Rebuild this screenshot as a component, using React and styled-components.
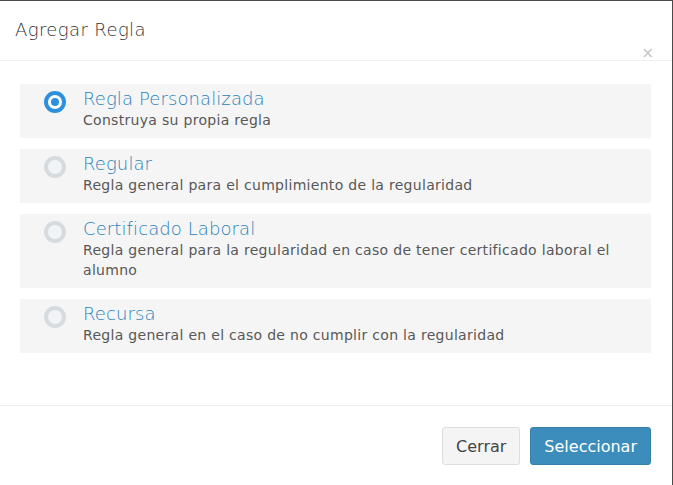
import React, { useState } from 'react';
import styled, { createGlobalStyle } from 'styled-components';

const GlobalStyle = createGlobalStyle`
  html, body {
    margin: 0;
    padding: 0;
    background: #fff;
  }
  * {
    box-sizing: border-box;
  }
`;

const Modal = styled.div`
  width: 674px;
  height: 486px;
  margin-left: -1px;
  border: 1px solid #4a4a4a;
  background: #fff;
  font-family: "DejaVu Sans", "Open Sans", sans-serif;
  display: flex;
  flex-direction: column;
  overflow: hidden;
`;

const Header = styled.div`
  display: flex;
  justify-content: space-between;
  align-items: flex-start;
  height: 60px;
  padding: 18px 18px 0 15px;
  border-bottom: 1px solid #f0f0f0;
`;

const Title = styled.h4`
  margin: 0;
  font-size: 18px;
  letter-spacing: 0.4px;
  line-height: 22px;
  font-weight: 200;
  color: #333;
`;

const Close = styled.button`
  align-self: flex-end;
  margin-bottom: -1px;
  padding: 0;
  border: none;
  background: none;
  font-family: "DejaVu Sans", sans-serif;
  font-size: 15px;
  line-height: 15px;
  color: #c4c4c4;
  cursor: pointer;
`;

const Body = styled.div`
  display: flex;
  flex-direction: column;
  gap: 11px;
  padding: 23px 21px 0 20px;
  flex: 1;
`;

const Option = styled.label`
  display: flex;
  align-items: flex-start;
  gap: 17px;
  padding: 4px 15px 8px 24px;
  background: #f5f5f5;
  cursor: pointer;
`;

const Radio = styled.span`
  flex: none;
  width: 22px;
  height: 22px;
  margin-top: 3px;
  border-radius: 50%;
  border: 4px solid ${(p) => (p.$checked ? '#2e8fdc' : '#d6dbdf')};
  background: ${(p) => (p.$checked ? '#fff' : '#f2f3f4')};
  display: flex;
  align-items: center;
  justify-content: center;

  &::after {
    content: '';
    width: 8px;
    height: 8px;
    border-radius: 50%;
    background: ${(p) => (p.$checked ? '#2e8fdc' : 'transparent')};
  }
`;

const Text = styled.div`
  display: flex;
  flex-direction: column;
`;

const OptionTitle = styled.span`
  font-size: 18px;
  letter-spacing: 0.1px;
  line-height: 22px;
  font-weight: 200;
  color: #2a82ba;
`;

const OptionDesc = styled.span`
  font-size: 14px;
  letter-spacing: 0.3px;
  line-height: 20px;
  color: #585858;
`;

const Footer = styled.div`
  display: flex;
  justify-content: flex-end;
  gap: 10px;
  height: 80px;
  padding: 21px 21px 0 15px;
  border-top: 1px solid #f0f0f0;
`;

const Button = styled.button`
  height: 38px;
  padding: 0 13px;
  border-radius: 3px;
  font-family: "DejaVu Sans", sans-serif;
  font-size: 16px;
  border: 1px solid ${(p) => (p.$primary ? '#367fa9' : '#ddd')};
  background: ${(p) => (p.$primary ? '#3c8dbc' : '#f4f4f4')};
  color: ${(p) => (p.$primary ? '#fff' : '#444')};
  cursor: pointer;
`;

const rules = [
  { title: 'Regla Personalizada', desc: 'Construya su propia regla' },
  { title: 'Regular', desc: 'Regla general para el cumplimiento de la regularidad' },
  {
    title: 'Certificado Laboral',
    desc: 'Regla general para la regularidad en caso de tener certificado laboral el alumno',
  },
  { title: 'Recursa', desc: 'Regla general en el caso de no cumplir con la regularidad' },
];

const App = () => {
  const [selected, setSelected] = useState(0);

  return (
    <>
      <GlobalStyle />
      <Modal>
        <Header>
          <Title>Agregar Regla</Title>
          <Close>×</Close>
        </Header>
        <Body>
          {rules.map((rule, i) => (
            <Option key={rule.title} onClick={() => setSelected(i)}>
              <Radio $checked={selected === i} />
              <Text>
                <OptionTitle>{rule.title}</OptionTitle>
                <OptionDesc>{rule.desc}</OptionDesc>
              </Text>
            </Option>
          ))}
        </Body>
        <Footer>
          <Button>Cerrar</Button>
          <Button $primary>Seleccionar</Button>
        </Footer>
      </Modal>
    </>
  );
};

export default App;
